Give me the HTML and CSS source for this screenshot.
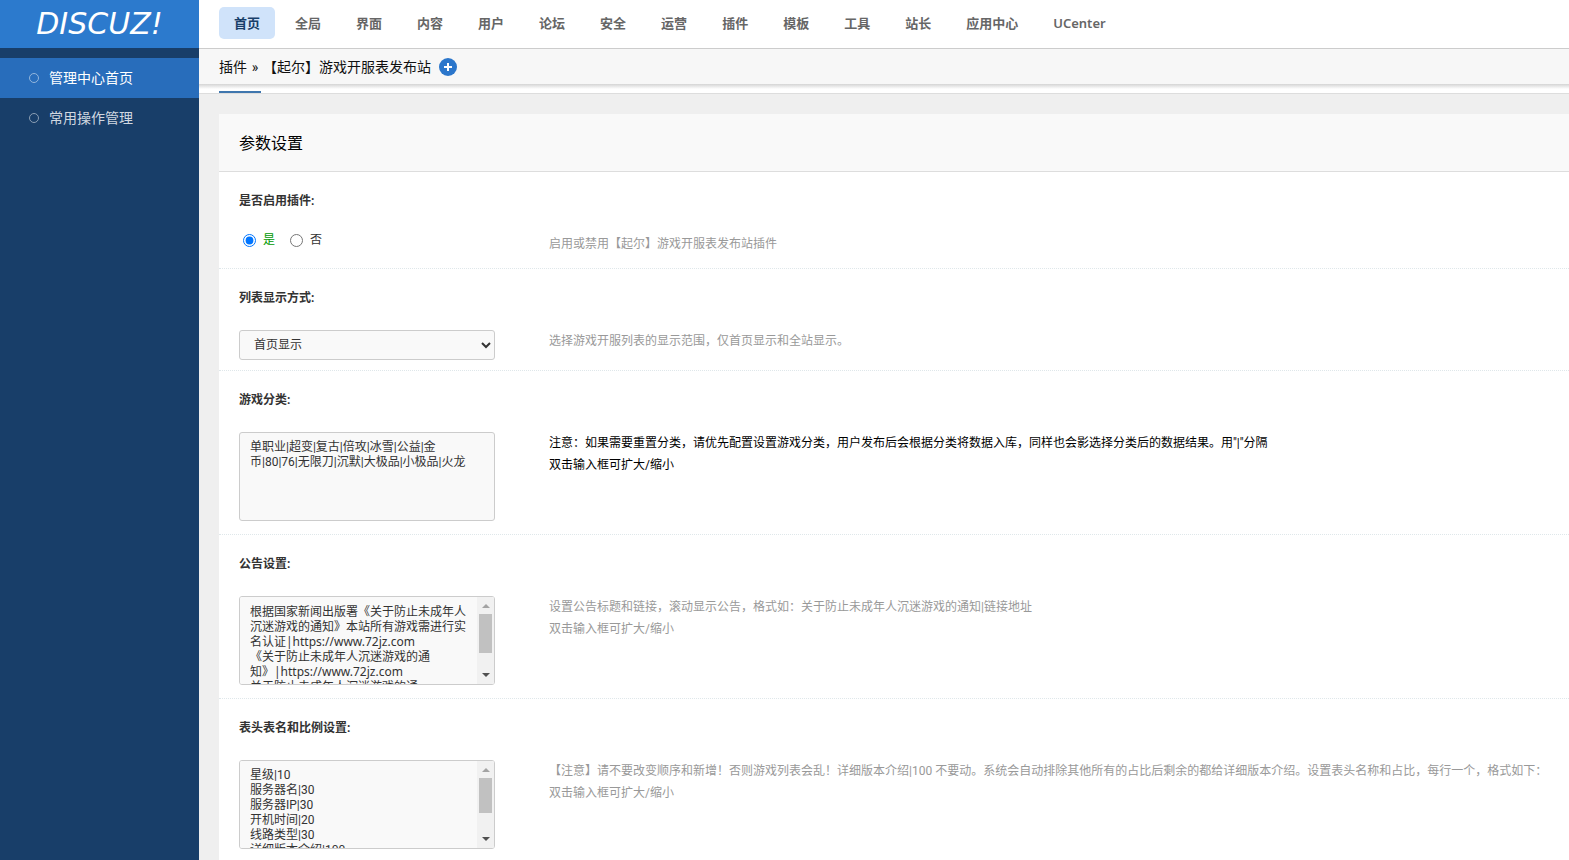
FILE: index.html
```html
<!DOCTYPE html>
<html lang="zh-CN">
<head>
<meta charset="utf-8">
<title>Discuz! 管理中心</title>
<link rel="stylesheet" href="styles.css">
</head>
<body>
<div class="shell">
  <aside class="sidebar">
    <a class="logo" href="#">DISCUZ!</a>
    <nav class="side-nav">
      <a class="side-link active" href="#">管理中心首页</a>
      <a class="side-link" href="#">常用操作管理</a>
    </nav>
  </aside>
  <div class="content">
    <nav class="top-nav">
      <a class="top-link active" href="#">首页</a>
      <a class="top-link" href="#">全局</a>
      <a class="top-link" href="#">界面</a>
      <a class="top-link" href="#">内容</a>
      <a class="top-link" href="#">用户</a>
      <a class="top-link" href="#">论坛</a>
      <a class="top-link" href="#">安全</a>
      <a class="top-link" href="#">运营</a>
      <a class="top-link" href="#">插件</a>
      <a class="top-link" href="#">模板</a>
      <a class="top-link" href="#">工具</a>
      <a class="top-link" href="#">站长</a>
      <a class="top-link" href="#">应用中心</a>
      <a class="top-link" href="#">UCenter</a>
    </nav>
    <div class="crumbs">
      <span>插件</span><span class="sep">»</span><span>【起尔】游戏开服表发布站</span>
      <button class="add" type="button" aria-label="添加">
        <svg width="18" height="18" viewBox="0 0 18 18"><circle cx="9" cy="9" r="9" fill="#2b76cb"/><path d="M9 5v8M5 9h8" stroke="#fff" stroke-width="2"/></svg>
      </button>
    </div>
    <div class="tabs"><span class="tab-current"></span></div>
    <main class="main">
      <form class="panel">
        <h1 class="panel-title">参数设置</h1>

        <section class="row">
          <h2 class="name">是否启用插件:</h2>
          <div class="control radios">
            <label class="radio on"><input type="radio" name="enabled" checked>是</label>
            <label class="radio"><input type="radio" name="enabled">否</label>
          </div>
          <p class="hint">启用或禁用【起尔】游戏开服表发布站插件</p>
        </section>

        <section class="row">
          <label class="name" for="mode">列表显示方式:</label>
          <div class="control"><select class="field select" id="mode"><option>首页显示</option><option>全站显示</option></select></div>
          <p class="hint">选择游戏开服列表的显示范围，仅首页显示和全站显示。</p>
        </section>

        <section class="row">
          <label class="name" for="types">游戏分类:</label>
          <div class="control"><textarea class="field area" id="types">单职业|超变|复古|倍攻|冰雪|公益|金币|80|76|无限刀|沉默|大极品|小极品|火龙</textarea></div>
          <p class="hint strong">注意：如果需要重置分类，请优先配置设置游戏分类，用户发布后会根据分类将数据入库，同样也会影选择分类后的数据结果。用"|"分隔<br>双击输入框可扩大/缩小</p>
        </section>

        <section class="row">
          <label class="name" for="notice">公告设置:</label>
          <div class="control">
            <div class="scroll-box">
              <textarea class="field area links" id="notice">根据国家新闻出版署《关于防止未成年人沉迷游戏的通知》本站所有游戏需进行实名认证|https://www.72jz.com
《关于防止未成年人沉迷游戏的通知》|https://www.72jz.com
关于防止未成年人沉迷游戏的通知|https://www.72jz.com
关于防止未成年人沉迷游戏的通知|https://www.72jz.com</textarea>
              <span class="bar"><i class="arrow up"></i><i class="thumb"></i><i class="arrow down"></i></span>
            </div>
          </div>
          <p class="hint">设置公告标题和链接，滚动显示公告，格式如：关于防止未成年人沉迷游戏的通知|链接地址<br>双击输入框可扩大/缩小</p>
        </section>

        <section class="row">
          <label class="name" for="columns">表头表名和比例设置:</label>
          <div class="control">
            <div class="scroll-box">
              <textarea class="field area" id="columns">星级|10
服务器名|30
服务器IP|30
开机时间|20
线路类型|30
详细版本介绍|100
客服QQ|20
详情|10
点击查看|10
推荐|10</textarea>
              <span class="bar"><i class="arrow up"></i><i class="thumb short"></i><i class="arrow down"></i></span>
            </div>
          </div>
          <p class="hint">【注意】请不要改变顺序和新增！否则游戏列表会乱！详细版本介绍|100 不要动。系统会自动排除其他所有的占比后剩余的都给详细版本介绍。设置表头名称和占比，每行一个，格式如下：<br>双击输入框可扩大/缩小</p>
        </section>
      </form>
    </main>
  </div>
</div>
</body>
</html>
```

FILE: styles.css
```css
*,
*::before {
  box-sizing: border-box;
}

body {
  margin: 0;
  font: 12px/22px Roboto, "Noto Sans CJK SC", sans-serif;
  color: #333;
  text-spacing-trim: space-all;
}

a {
  color: inherit;
  text-decoration: none;
}

.shell {
  display: flex;
  height: 100vh;
  overflow: hidden;
}

/* Sidebar */
.sidebar {
  flex: none;
  width: 199px;
  background: #183e69;
}

.logo {
  display: flex;
  align-items: center;
  justify-content: center;
  height: 48px;
  background: #2c7acd;
  color: #fff;
  font: italic 30px/48px "DejaVu Sans", sans-serif;
}

.side-nav {
  padding-top: 10px;
}

.side-link {
  display: flex;
  align-items: center;
  gap: 10px;
  height: 40px;
  padding-left: 29px;
  color: #d1d8e1;
  font-size: 14px;
}

.side-link::before {
  content: "";
  width: 10px;
  height: 10px;
  border: 1px solid #8b9eb4;
  border-radius: 50%;
}

.side-link.active {
  background: #286dbb;
  color: #fff;
}

.side-link.active::before {
  border-color: #93b6dd;
}

/* Header */
.content {
  display: flex;
  flex: 1;
  flex-direction: column;
  min-width: 0;
}

.top-nav {
  display: flex;
  flex: none;
  align-items: center;
  gap: 5px;
  height: 49px;
  padding: 0 20px 2px;
  border-bottom: 1px solid #ccc;
  background: #fff;
}

.top-link {
  padding: 5px 15px;
  border-radius: 5px;
  color: #666;
  font-family: "Noto Sans", "Noto Sans CJK SC", sans-serif;
  font-size: 13px;
  font-weight: 600;
  white-space: nowrap;
}

.top-link.active {
  background: #d0e3fa;
  color: #183e69;
}

.crumbs {
  display: flex;
  flex: none;
  align-items: center;
  height: 35px;
  padding: 0 20px;
  background: #f7f7f7;
  color: #111;
  font-size: 14px;
}

.sep {
  width: 16px;
  text-align: center;
}

.add {
  display: flex;
  margin-left: 8px;
  padding: 0;
  border: 0;
  background: none;
}

.tabs {
  display: flex;
  flex: none;
  height: 10px;
  padding: 0 20px;
  border-bottom: 1px solid #ddd;
  background: linear-gradient(#d4d4d4, #fff 5px);
}

.tab-current {
  width: 42px;
  border-bottom: 2px solid #3f76ae;
}

/* Settings */
.main {
  flex: 1;
  min-height: 0;
  padding: 20px 0 0 20px;
  overflow-y: auto;
  background: #efefef;
  scrollbar-width: none;
}

.panel {
  background: #fff;
}

.panel-title {
  margin: 0;
  padding: 19px 20px 16px;
  border-bottom: 1px solid #ddd;
  background: #f9f9f9;
  color: #000;
  font-size: 16px;
  font-weight: 400;
}

.row {
  display: grid;
  grid-template-columns: 310px 1fr;
  padding: 18px 20px 10px;
  border-bottom: 1px dotted #dfe7ea;
}

.name {
  grid-column: 1 / -1;
  margin: 0 0 20px;
  font-size: 12px;
  font-weight: 700;
}

.control {
  padding-top: 1px;
}

.radios {
  display: flex;
  gap: 15px;
  height: 26px;
  padding: 0 4px 10px;
}

.radio {
  display: flex;
  align-items: center;
  gap: 7px;
}

.radio input {
  width: 13px;
  height: 13px;
  margin: 0;
}

.on {
  color: #090;
}

.field {
  display: block;
  width: 256px;
  border: 1px solid #ccc;
  border-radius: 3px;
  background-color: #f9f9f9;
  color: #333;
  font: 12px/15px Roboto, "Noto Sans CJK SC", sans-serif;
}

.select {
  height: 30px;
  padding: 0 0 0 10px;
}

.area {
  height: 89px;
  margin-bottom: 3px;
  padding: 7px 18px 7px 10px;
  overflow-y: auto;
  resize: none;
  scrollbar-width: none;
}

.links {
  font-family: "Noto Sans", "Noto Sans CJK SC", sans-serif;
}

/* Scrollbar laid over the right edge of a long text box */
.scroll-box {
  position: relative;
  width: 256px;
}

.bar {
  position: absolute;
  top: 1px;
  right: 1px;
  bottom: 1px;
  display: flex;
  flex-direction: column;
  align-items: center;
  width: 17px;
  padding: 7px 0;
  border-radius: 0 2px 2px 0;
  background: #f1f1f1;
  pointer-events: none;
}

.arrow {
  border: 4px solid transparent;
}

.up {
  border-top: 0;
  border-bottom-color: #a3a3a3;
}

.down {
  margin-top: auto;
  border-bottom: 0;
  border-top-color: #505050;
}

.thumb {
  width: 13px;
  height: 39px;
  margin-top: 6px;
  background: #c1c1c1;
}

.thumb.short {
  height: 35px;
}

.hint {
  margin: 0;
  padding-top: 1px;
  color: #999;
}

.hint.strong {
  color: #000;
}
```
